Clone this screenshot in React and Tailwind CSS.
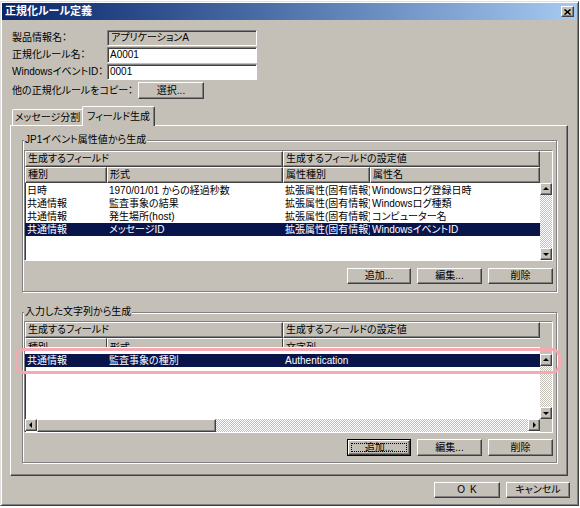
import React from "react";

const raised =
  "border border-t-white border-l-white border-r-[#404040] border-b-[#404040] shadow-[inset_-1px_-1px_0_#808080]";
const sunken =
  "border border-t-[#808080] border-l-[#808080] border-r-white border-b-white shadow-[inset_1px_1px_0_#404040]";
const dither =
  "bg-[image:repeating-conic-gradient(#ffffff_0%_25%,#c4c0b8_0%_50%)] bg-[length:2px_2px]";

function Arrow({ dir }) {
  const pts = {
    up: "1,5 4,2 7,5",
    down: "1,3 4,6 7,3",
    left: "5,1 2,4 5,7",
    right: "3,1 6,4 3,7",
  }[dir];
  return (
    <div className={`w-[12px] h-[12px] shrink-0 bg-[#c4c0b8] flex items-center justify-center ${raised}`}>
      <svg width="8" height="8" viewBox="0 0 8 8">
        <polygon points={pts} fill="#000" />
      </svg>
    </div>
  );
}

function VScroll() {
  return (
    <div className="flex-1 flex flex-col">
      <Arrow dir="up" />
      <div className={`flex-1 ${dither}`} />
      <Arrow dir="down" />
    </div>
  );
}

function Btn({ className, children, focus }) {
  if (focus) {
    return (
      <div className={`border border-black ${className}`}>
        <div className={`h-full bg-[#c4c0b8] flex items-center justify-center p-[2px] ${raised}`}>
          <div className="w-full h-full border border-dotted border-black flex items-center justify-center whitespace-nowrap">
            {children}
          </div>
        </div>
      </div>
    );
  }
  return (
    <div className={`bg-[#c4c0b8] flex items-center justify-center whitespace-nowrap ${raised} ${className}`}>
      {children}
    </div>
  );
}

function Hd({ className, children }) {
  return (
    <div
      className={`h-full shrink-0 bg-[#c4c0b8] pl-[2px] flex items-center overflow-hidden whitespace-nowrap ${raised} ${className}`}
    >
      {children}
    </div>
  );
}

function Cell({ className, children }) {
  return (
    <div className={`h-full shrink-0 pl-[2px] flex items-center overflow-hidden whitespace-nowrap ${className}`}>
      {children}
    </div>
  );
}

function Group({ title, className, children }) {
  return (
    <div
      className={`relative w-[535px] border border-[#808080] shadow-[inset_1px_1px_0_#fff,1px_1px_0_#fff] ${className}`}
    >
      <span className="absolute -top-[7px] left-[1px] px-[1px] bg-[#c4c0b8] leading-[12px] whitespace-nowrap">
        {title}
      </span>
      {children}
    </div>
  );
}

const rows = [
  ["日時", "1970/01/01 からの経過秒数", "拡張属性(固有情報)", "Windowsログ登録日時"],
  ["共通情報", "監査事象の結果", "拡張属性(固有情報)", "Windowsログ種類"],
  ["共通情報", "発生場所(host)", "拡張属性(固有情報)", "コンピューター名"],
  ["共通情報", "メッセージID", "拡張属性(固有情報)", "WindowsイベントID"],
];

export default function App() {
  return (
    <div className="relative w-[580px] h-[508px] bg-white overflow-hidden font-['Liberation_Sans','Noto_Sans_CJK_JP',sans-serif] [font-feature-settings:'palt'] text-[10px] text-black leading-none">
      <div className="mt-[1px] w-[579px] h-[505px] bg-[#c4c0b8] border border-t-[#dfdfdf] border-l-[#dfdfdf] border-r-[#404040] border-b-[#404040] p-[1px] shadow-[inset_1px_1px_0_#fff,inset_-1px_-1px_0_#808080] flex flex-col">
        {/* Title bar */}
        <div className="h-[17px] shrink-0 flex items-center justify-between bg-gradient-to-r from-[#0a246a] to-[#a6caf0] pl-[3px] pr-[3px]">
          <span className="text-white font-bold text-[11px]">正規化ルール定義</span>
          <div className={`w-[13px] h-[11px] bg-[#c4c0b8] flex items-center justify-center ${raised}`}>
            <svg width="7" height="6" viewBox="0 0 7 6">
              <path d="M0.5 0.5 L6.5 5.5 M6.5 0.5 L0.5 5.5" stroke="#000" strokeWidth="1.6" />
            </svg>
          </div>
        </div>

        {/* Form */}
        <div className="mt-[10px] pl-[10px] flex flex-col">
          <div className="h-[16px] flex items-center">
            <span className="w-[95px] shrink-0 whitespace-nowrap">製品情報名：</span>
            <div className={`w-[150px] h-[16px] bg-[#c4c0b8] flex items-center pl-[3px] ${sunken}`}>
              アプリケーションA
            </div>
          </div>
          <div className="mt-[1px] h-[16px] flex items-center">
            <span className="w-[95px] shrink-0 whitespace-nowrap">正規化ルール名：</span>
            <div className={`w-[150px] h-[16px] bg-white flex items-center pl-[2px] ${sunken}`}>A0001</div>
          </div>
          <div className="mt-[1px] h-[16px] flex items-center">
            <span className="w-[95px] shrink-0 whitespace-nowrap">WindowsイベントID：</span>
            <div className={`w-[150px] h-[16px] bg-white flex items-center pl-[2px] ${sunken}`}>0001</div>
          </div>
          <div className="mt-[2px] h-[17px] flex items-center">
            <span className="w-[126px] shrink-0 whitespace-nowrap">他の正規化ルールをコピー：</span>
            <Btn className="w-[66px] h-[17px]">選択...</Btn>
          </div>
        </div>

        {/* Tabs */}
        <div className="mt-[7px] ml-[8px] w-[558px] flex flex-col">
          <div className="h-[19px] flex items-end pl-[2px]">
            <div className="w-[70px] h-[16px] border-t border-l border-t-white border-l-white rounded-tl-[2px] flex items-center justify-center whitespace-nowrap">
              メッセージ分割
            </div>
            <div className="relative z-10 w-[73px] h-[20px] -mb-[1px] bg-[#c4c0b8] border-t border-l border-r border-t-white border-l-white border-r-[#404040] rounded-t-[2px] shadow-[inset_-1px_0_0_#808080] flex items-center justify-center whitespace-nowrap">
              フィールド生成
            </div>
          </div>

          <div className="h-[351px] border border-t-white border-l-white border-r-[#404040] border-b-[#404040] shadow-[inset_-1px_-1px_0_#808080] pl-[11px] pt-[14px] flex flex-col">
            {/* Group 1 */}
            <Group title="JP1イベント属性値から生成" className="h-[152px]">
              <div className={`ml-[1px] mt-[9px] w-[529px] h-[111px] flex bg-white ${sunken}`}>
                <div className="w-[515px] flex flex-col">
                  <div className="h-[16px] flex">
                    <Hd className="w-[258px]">生成するフィールド</Hd>
                    <Hd className="w-[257px]">生成するフィールドの設定値</Hd>
                  </div>
                  <div className="h-[16px] flex">
                    <Hd className="w-[82px]">種別</Hd>
                    <Hd className="w-[176px]">形式</Hd>
                    <Hd className="w-[87px]">属性種別</Hd>
                    <Hd className="w-[170px]">属性名</Hd>
                  </div>
                  <div className="flex-1 pt-[1px] flex flex-col">
                    {rows.map((r, i) => (
                      <div
                        key={i}
                        className={`h-[13px] flex ${i === 3 ? "bg-[#08144a] text-white" : ""}`}
                      >
                        <Cell className="w-[82px]">{r[0]}</Cell>
                        <Cell className="w-[176px]">{r[1]}</Cell>
                        <Cell className="w-[87px]">{r[2]}</Cell>
                        <Cell className="w-[170px]">{r[3]}</Cell>
                      </div>
                    ))}
                  </div>
                </div>
                <div className="w-[12px] flex flex-col">
                  <div className="h-[32px] shrink-0 bg-[#c4c0b8] border-t border-t-white" />
                  <VScroll />
                </div>
              </div>
              <div className="mt-[7px] pr-[3px] flex justify-end gap-[6px]">
                <Btn className="w-[64px] h-[16px]">追加...</Btn>
                <Btn className="w-[65px] h-[16px]">編集...</Btn>
                <Btn className="w-[65px] h-[16px]">削除</Btn>
              </div>
            </Group>

            {/* Group 2 */}
            <Group title="入力した文字列から生成" className="mt-[20px] h-[151px]">
              <div className={`ml-[1px] mt-[8px] w-[529px] h-[112px] flex bg-white ${sunken}`}>
                <div className="w-[515px] flex flex-col">
                  <div className="h-[16px] shrink-0 flex">
                    <Hd className="w-[258px]">生成するフィールド</Hd>
                    <Hd className="w-[257px]">生成するフィールドの設定値</Hd>
                  </div>
                  <div className="h-[9px] shrink-0 flex overflow-hidden">
                    <div className="w-[82px] shrink-0 bg-[#c4c0b8] border-t border-l border-r border-t-white border-l-white border-r-[#404040] pl-[2px] pt-[3px] leading-[12px] overflow-hidden">
                      種別
                    </div>
                    <div className="w-[176px] shrink-0 bg-[#c4c0b8] border-t border-l border-r border-t-white border-l-white border-r-[#404040] pl-[2px] pt-[3px] leading-[12px] overflow-hidden">
                      形式
                    </div>
                    <div className="w-[257px] shrink-0 bg-[#c4c0b8] border-t border-l border-t-white border-l-white pl-[2px] pt-[3px] leading-[12px] overflow-hidden">
                      文字列
                    </div>
                  </div>
                  <div className="h-[7px] shrink-0 bg-white" />
                  <div className="flex-1 flex flex-col">
                    <div className="h-[13px] flex bg-[#08144a] text-white">
                      <Cell className="w-[82px]">共通情報</Cell>
                      <Cell className="w-[176px]">監査事象の種別</Cell>
                      <Cell className="w-[257px]">Authentication</Cell>
                    </div>
                  </div>
                  <div className="h-[13px] shrink-0 flex">
                    <Arrow dir="left" />
                    <div className={`w-[179px] bg-[#c4c0b8] ${raised}`} />
                    <div className={`flex-1 ${dither}`} />
                    <Arrow dir="right" />
                  </div>
                </div>
                <div className="w-[12px] flex flex-col">
                  <div className="h-[32px] shrink-0 bg-[#c4c0b8] border-t border-t-white" />
                  <VScroll />
                  <div className="h-[13px] shrink-0 bg-[#c4c0b8]" />
                </div>
              </div>
              <div className="mt-[6px] pr-[3px] flex justify-end gap-[6px]">
                <Btn focus className="w-[64px] h-[17px]">追加...</Btn>
                <Btn className="w-[65px] h-[17px]">編集...</Btn>
                <Btn className="w-[65px] h-[17px]">削除</Btn>
              </div>
            </Group>
          </div>
        </div>

        {/* OK / Cancel */}
        <div className="mt-[6px] pr-[7px] flex justify-end gap-[6px]">
          <Btn className="w-[66px] h-[16px] tracking-[5px] pl-[5px]">OK</Btn>
          <Btn className="w-[64px] h-[16px]">キャンセル</Btn>
        </div>
      </div>

      {/* highlight annotation */}
      <div className="absolute left-[15px] top-[348px] w-[546px] h-[26px] border-[3px] border-[#f6a8b3] rounded-[9px]" />
    </div>
  );
}
